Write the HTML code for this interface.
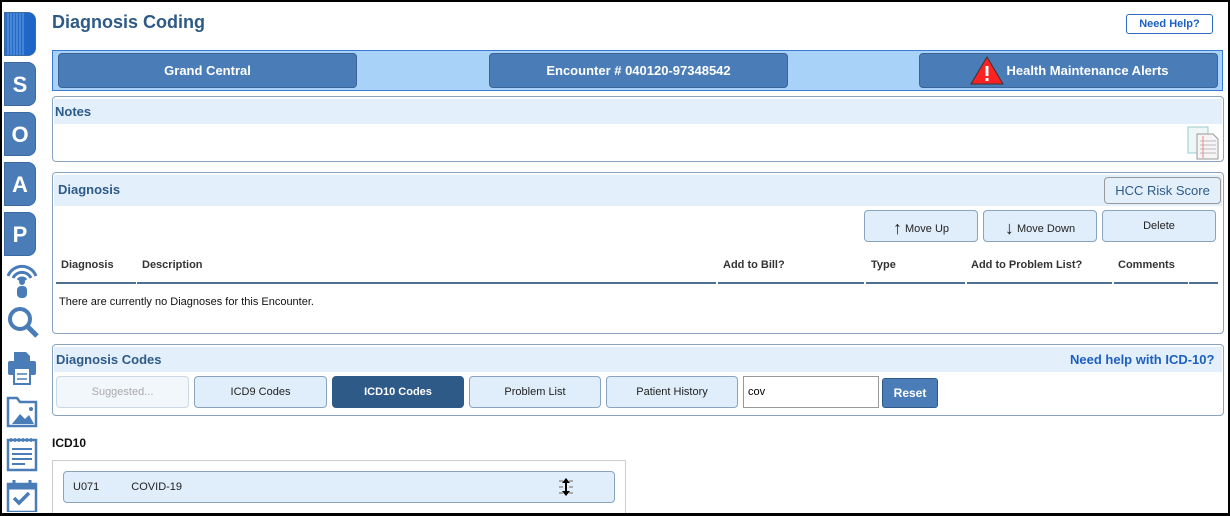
<!DOCTYPE html>
<html><head><meta charset="utf-8"><style>
*{box-sizing:border-box;margin:0;padding:0}
html,body{width:1230px;height:516px;overflow:hidden}
body{background:#fff;font-family:"Liberation Sans",Arial,sans-serif;position:relative}
.frame{position:absolute;left:0;top:0;width:1230px;height:516px;border:2px solid #000;border-bottom-width:3px;pointer-events:none;z-index:10}
.a{position:absolute}
.side{position:absolute;left:4px;width:32px;height:44px;background:#4a7db8;border:1px solid #3a6aa0;border-radius:0 8px 8px 0;color:#fff;font-weight:bold;font-size:22px;text-align:center;line-height:44px}
.bb{position:absolute;top:53px;height:35px;background:#4a7db8;border:1px solid #3a6496;border-radius:4px;color:#fff;font-weight:bold;font-size:13px;text-align:center;line-height:33px}
.panel{position:absolute;left:52px;width:1172px;border:1px solid #8aa4c0;border-radius:4px}
.ph{position:absolute;left:2px;right:2px;background:#e3f0fc;color:#2e5a88;font-weight:bold;font-size:13px}
.btn{position:absolute;background:#e0edfa;border:1px solid #8aa4c0;border-radius:4px;font-size:11px;color:#222;text-align:center}
.th{position:absolute;top:259px;font-size:11px;font-weight:bold;color:#333}
.ln{position:absolute;top:282px;height:2px;background:#4e6f92}
</style></head><body>
<div class="frame"></div>
<div class="side" style="top:12px;background:linear-gradient(90deg,#2a6fcc,#1c63c8);"><svg width="30" height="42" style="position:absolute;left:0;top:0"><path d="M3 0v42M6 0v42M9 0v42M12 0v42M15 0v42M18 0v42" stroke="#6a9fe0" stroke-width="1"/></svg></div>
<div class="side" style="top:62px">S</div>
<div class="side" style="top:112px">O</div>
<div class="side" style="top:162px">A</div>
<div class="side" style="top:212px">P</div>
<svg class="a" style="left:5px;top:262px" width="34" height="250" viewBox="0 0 34 250" fill="none" stroke="#4a7db8">
<path d="M3 14 A15 15 0 0 1 31 14" stroke-width="3"/><path d="M8 16 A10 10 0 0 1 26 16" stroke-width="3"/><path d="M13 18 A5 5 0 0 1 21 18" stroke-width="3"/>
<circle cx="17" cy="20" r="3" fill="#4a7db8" stroke="none"/><rect x="12" y="24" width="10" height="12" rx="4" fill="#4a7db8" stroke="none"/>
<circle cx="15" cy="57" r="10" stroke-width="4"/><path d="M22 64 L32 74" stroke-width="5"/>
<path d="M9 90 h12 l4 4 v6 h-16z" fill="#4a7db8" stroke="none"/><rect x="3" y="99" width="28" height="14" rx="2" fill="#4a7db8" stroke="none"/><rect x="9" y="106" width="16" height="16" fill="#fff" stroke="#4a7db8" stroke-width="2"/><path d="M12 112h10M12 117h10" stroke-width="1.5"/>
<path d="M3 136 v28 h28 v-24 h-16 l-3 -4z" stroke-width="2.5"/><path d="M7 162 l8 -10 l5 5 l4 -4 l5 9z" fill="#4a7db8" stroke="none"/><circle cx="26" cy="147" r="2" fill="#4a7db8" stroke="none"/>
<rect x="3" y="178" width="28" height="30" stroke-width="2.5"/><path d="M6 176v4M10 176v4M14 176v4M18 176v4M22 176v4M26 176v4" stroke-width="1.5"/><path d="M7 187h20M7 192h20M7 197h20M7 202h13" stroke-width="2"/>
<rect x="3" y="222" width="28" height="28" stroke-width="2.5"/><rect x="3" y="222" width="28" height="5" fill="#4a7db8"/><path d="M9 218v7M25 218v7" stroke-width="3"/><path d="M9 236 l5 5 l10 -10" stroke-width="3.5"/>
</svg>
<div class="a" style="left:52px;top:12px;font-size:18px;font-weight:bold;color:#2e5a88">Diagnosis Coding</div>
<div class="a" style="left:1126px;top:14px;width:87px;height:20px;border:1px solid #2e6ac0;border-radius:3px;font-size:11px;font-weight:bold;color:#1d5fc0;text-align:center;line-height:18px">Need Help?</div>
<div class="a" style="left:52px;top:50px;width:1171px;height:41px;background:#a8d2f8;border:1px solid #3a7bd5"></div>
<div class="bb" style="left:58px;width:299px">Grand Central</div>
<div class="bb" style="left:489px;width:299px">Encounter # 040120-97348542</div>
<div class="bb" style="left:919px;width:299px"><span style="margin-left:38px">Health Maintenance Alerts</span></div>
<svg class="a" style="left:970px;top:55px" width="34" height="30"><path d="M17 2 L33 29 H1z" fill="#f22" stroke="#333" stroke-width="1"/><rect x="15.5" y="11" width="3" height="10" fill="#fff"/><rect x="15.5" y="23" width="3" height="3" fill="#fff"/></svg>
<div class="panel" style="top:96px;height:66px"></div>
<div class="ph" style="left:54px;right:auto;width:1168px;top:99px;height:25px;line-height:25px;padding-left:1px">Notes</div>
<svg class="a" style="left:1187px;top:126px" width="33" height="34"><rect x="1" y="1" width="20" height="26" fill="#eef6f8" stroke="#9cc"/><path d="M10 8 h16 l5 5 v20 h-21z" fill="#f5f5f5" stroke="#999"/><path d="M13 15h16M13 19h16M13 23h16M13 27h16" stroke="#bbb"/><path d="M16 10v22" stroke="#e88"/></svg>
<div class="panel" style="top:172px;height:162px"></div>
<div class="ph" style="left:54px;right:auto;width:1168px;top:175px;height:31px;line-height:30px;padding-left:4px">Diagnosis</div>
<div class="btn" style="left:1104px;top:177px;width:117px;height:27px;line-height:25px;font-size:13px;color:#2e5a88;background:#e3f0fc;border-color:#999">HCC Risk Score</div>
<div class="btn" style="left:864px;top:210px;width:114px;height:32px;line-height:34px"><span style="font-size:18px;vertical-align:-2px">↑</span> Move Up</div>
<div class="btn" style="left:983px;top:210px;width:114px;height:32px;line-height:34px"><span style="font-size:18px;vertical-align:-2px">↓</span> Move Down</div>
<div class="btn" style="left:1102px;top:210px;width:114px;height:32px;line-height:30px">Delete</div>
<div class="th" style="left:61px">Diagnosis</div>
<div class="th" style="left:142px">Description</div>
<div class="th" style="left:723px">Add to Bill?</div>
<div class="th" style="left:871px">Type</div>
<div class="th" style="left:971px">Add to Problem List?</div>
<div class="th" style="left:1118px">Comments</div>
<div class="ln" style="left:56px;width:80px"></div><div class="ln" style="left:137px;width:579px"></div><div class="ln" style="left:718px;width:146px"></div><div class="ln" style="left:866px;width:99px"></div><div class="ln" style="left:967px;width:145px"></div><div class="ln" style="left:1114px;width:74px"></div><div class="ln" style="left:1189px;width:29px"></div>
<div class="a" style="left:59px;top:296px;font-size:11px;color:#111">There are currently no Diagnoses for this Encounter.</div>
<div class="panel" style="top:344px;height:72px"></div>
<div class="ph" style="left:54px;right:auto;width:1168px;top:347px;height:25px;line-height:25px;padding-left:2px">Diagnosis Codes</div>
<div class="a" style="left:1070px;top:352px;font-size:13px;font-weight:bold;color:#1d5fc0">Need help with ICD-10?</div>
<div class="btn" style="left:56px;top:376px;width:133px;height:32px;line-height:31px;background:#f2f7fc;border-color:#c8d8e6;color:#aaa">Suggested...</div>
<div class="btn" style="left:194px;top:376px;width:133px;height:32px;line-height:31px">ICD9 Codes</div>
<div class="btn" style="left:332px;top:376px;width:132px;height:32px;line-height:31px;background:#2e5a88;border-color:#2e5a88;color:#fff;font-weight:bold">ICD10 Codes</div>
<div class="btn" style="left:469px;top:376px;width:132px;height:32px;line-height:31px">Problem List</div>
<div class="btn" style="left:606px;top:376px;width:132px;height:32px;line-height:31px">Patient History</div>
<div class="a" style="left:743px;top:376px;width:136px;height:32px;border:1px solid #999;font-size:11px;line-height:30px;padding-left:4px">cov</div>
<div class="a" style="left:882px;top:378px;width:56px;height:30px;background:#4a7db8;border:1px solid #2e5a88;border-radius:3px;color:#fff;font-weight:bold;font-size:12px;text-align:center;line-height:28px">Reset</div>
<div class="a" style="left:52px;top:436px;font-size:12px;font-weight:bold;color:#111">ICD10</div>
<div class="a" style="left:52px;top:460px;width:574px;height:56px;border:1px solid #ccc;border-bottom:none"></div>
<div class="btn" style="left:63px;top:471px;width:552px;height:32px;text-align:left;line-height:31px;font-size:11px"><span style="margin-left:9px">U071</span><span style="margin-left:32px">COVID-19</span></div>
<svg class="a" style="left:557px;top:477px" width="18" height="20"><path d="M2 4h4M12 4h4M2 10h4M12 10h4M2 16h4M12 16h4" stroke="#aaa" stroke-width="2"/><path d="M9 2v16" stroke="#000" stroke-width="2"/><path d="M5 6l4-5 4 5zM5 14l4 5 4-5z" fill="#000"/></svg>
</body></html>
